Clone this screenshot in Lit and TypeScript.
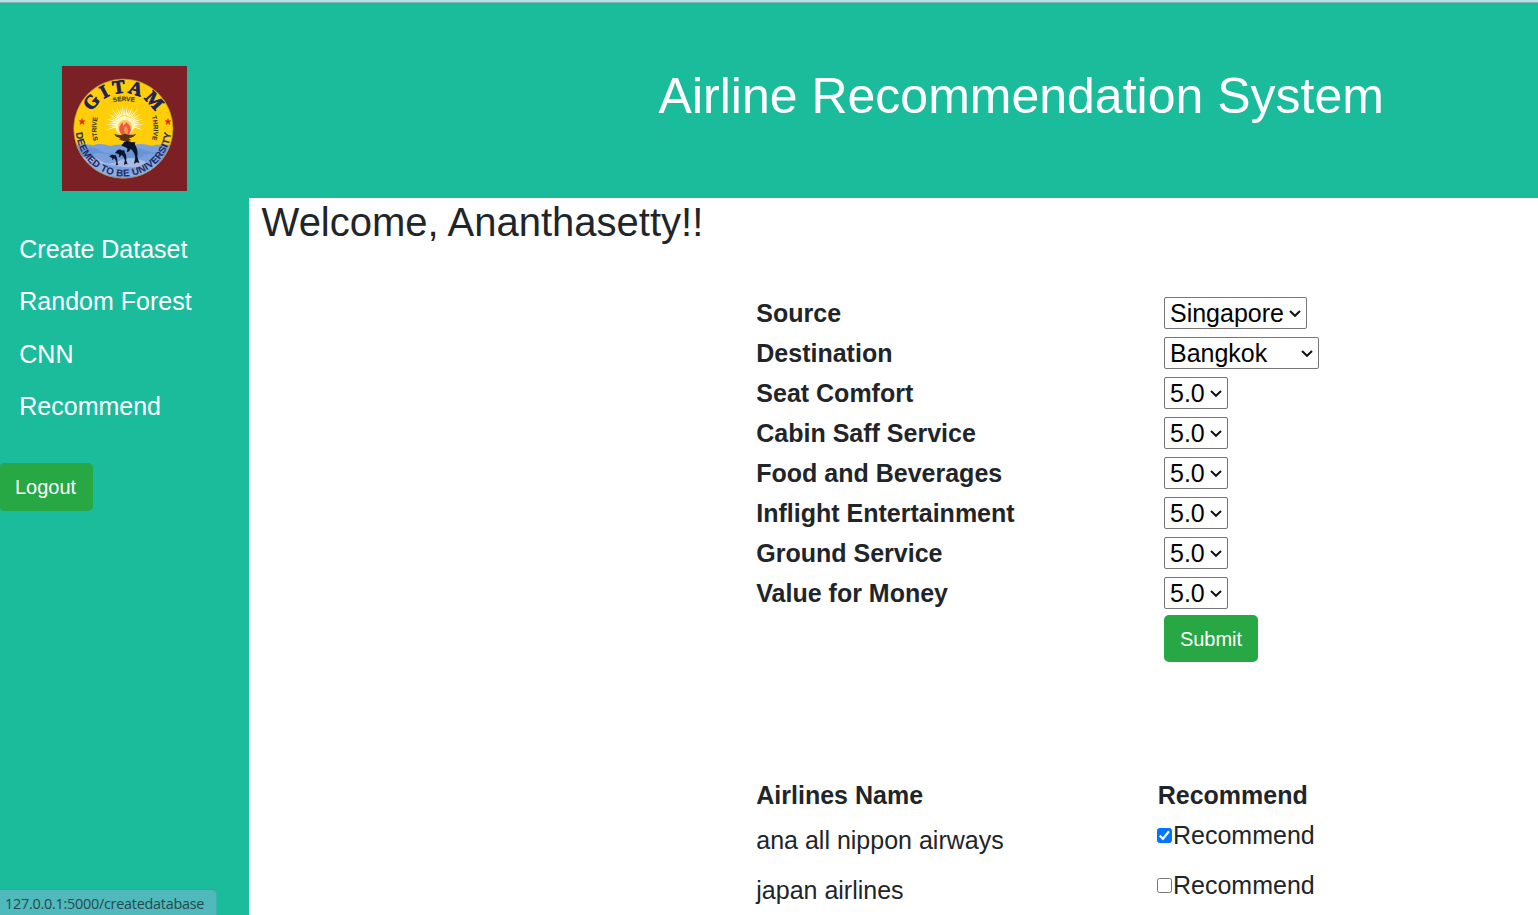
import { LitElement, html, svg, css } from "lit";
import { customElement, state } from "lit/decorators.js";

const rays = Array.from({ length: 27 }, (_, i) => {
  const a = Math.PI * (-1.1 + (i * 1.2) / 26);
  const r = i % 2 ? 50 : 62;
  const p = (ang: number, d: number) => `${188 + Math.cos(ang) * d},${174 + Math.sin(ang) * d}`;
  return svg`<polygon points="${p(a - 0.08, 26)} ${p(a, r)} ${p(a + 0.08, 26)}"/>`;
});

const dolphin = "M0 13 C4 11 6 3 13 1 C20 -2 27 1 32 4 C35 2 39 3 43 5 C39 7 41 9 42 12 C48 21 50 33 48 46 L54 63 L46 61 L38 66 L42 47 C40 36 36 28 28 22 C26 27 23 30 17 32 L18 21 C12 17 6 16 0 13Z";

@customElement("university-logo")
export class UniversityLogo extends LitElement {
  static styles = css`
    :host { display: block; width: 125px; height: 125px; }
    svg { display: block; width: 100%; height: 100%; }
    text { font-family: "Liberation Sans", Arial, sans-serif; font-weight: bold; fill: #1e2458; }
    .name { font-family: "Liberation Serif", serif; font-size: 56px; fill: #20205c; stroke: #20205c; stroke-width: 2.5; }
    .small { font-size: 19px; fill: #3b3718; stroke: #3b3718; stroke-width: .4; }
    .motto { font-size: 29px; fill: #1f2a62; stroke: #1f2a62; stroke-width: .3; }
  `;
  render() {
    return html`<svg viewBox="0 0 375 375" role="img" aria-label="GITAM">
      <defs>
        <clipPath id="disc"><circle cx="184" cy="188" r="149"/></clipPath>
        <path id="top" d="M77 188 A107 107 0 0 1 291 188"/>
        <path id="bottom" d="M41 188 A143 143 0 0 0 327 188"/>
        <path id="left" d="M108 223 Q98 188 108 151"/>
        <path id="right" d="M269 151 Q281 188 269 226"/>
        <path id="serve" d="M154 109 Q186 101 220 109"/>
      </defs>
      <rect width="375" height="375" fill="#7b2024"/>
      <g clip-path="url(#disc)">
        <rect width="375" height="375" fill="#ffce08"/>
        <path d="M30 238 Q65 232 94 238 Q115 229 144 240 Q177 232 207 239 Q235 229 268 239 Q304 231 345 240 V345 H30Z" fill="#7ba0de"/>
        <path d="M43 256 Q91 235 114 253 T182 256 T246 251 T328 262 L315 273 Q268 253 240 272 T158 272 T90 267 T43 274Z" fill="#6894d6"/>
        <path d="M52 278 Q85 262 112 282 T171 284 T250 287 T320 275 L302 294 Q258 296 231 302 T142 297 T55 290Z" fill="#a7bbe5"/>
        <path d="M72 302 Q110 283 158 309 T230 307 T302 301 L282 329 H94Z" fill="#8cafe3"/>
      </g>
      <circle cx="184" cy="188" r="149" fill="none" stroke="#ad862a" stroke-width="2"/>
      <g fill="#fffbe3">${rays}</g>
      <circle cx="188" cy="179" r="29" fill="#fff6bd"/>
      <circle cx="189" cy="183" r="21" fill="#ffc45c"/>
      <path d="M179 207 C168 194 170 178 183 169 C181 181 186 182 192 169 C208 179 211 194 200 207Z" fill="#ee5a3d"/>
      <path d="M190 204 Q182 191 191 179 Q203 191 196 205Z" fill="#ff9350"/>
      <path d="M157 204 Q175 210 189 203 Q207 210 222 203 Q217 215 200 216 L207 222 Q188 230 171 220 L176 216 Q160 214 157 204Z" fill="#5a3514"/>
      <g fill="#0d1229">
        <path transform="translate(178 225) scale(1 1.05)" d=${dolphin}/>
        <path transform="translate(159 251) scale(.7)" d=${dolphin}/>
        <path transform="translate(142 266) scale(.5)" d=${dolphin}/>
      </g>
      <text class="name" text-anchor="middle"><textPath href="#top" startOffset="50%" textLength="231">GITAM</textPath></text>
      <text class="small"><textPath href="#serve" textLength="64">SERVE</textPath></text>
      <text class="small"><textPath href="#left" textLength="69">STRIVE</textPath></text>
      <text class="small"><textPath href="#right" textLength="72">THRIVE</textPath></text>
      <text class="motto" text-anchor="middle"><textPath href="#bottom" startOffset="50%" textLength="424">DEEMED TO BE UNIVERSITY</textPath></text>
      <g fill="#e8281f" stroke="#e8281f" stroke-width="2">
        <path d="M60 158 L62 164 L68 164 L64 169 L66 175 L60 171 L54 175 L56 169 L52 164 L58 164Z"/>
        <path transform="translate(258 0)" d="M60 158 L62 164 L68 164 L64 169 L66 175 L60 171 L54 175 L56 169 L52 164 L58 164Z"/>
      </g>
    </svg>`;
  }
}

@customElement("app-root")
export class AppRoot extends LitElement {
  @state() private airlines = [
    { name: "ana all nippon airways", recommended: true },
    { name: "japan airlines", recommended: false },
  ];

  private fields = [
    ["Source", "Singapore", "city"],
    ["Destination", "Bangkok", "wide"],
    ...["Seat Comfort", "Cabin Saff Service", "Food and Beverages", "Inflight Entertainment", "Ground Service", "Value for Money"].map((n) => [n, "5.0", "score"]),
  ];

  static styles = css`
    :host { display: block; height: 915px; overflow: hidden; position: relative; background: #fff; color: #212529; font: 25px/38px "Liberation Sans", Arial, sans-serif; }
    * { box-sizing: border-box; }
    .edge { height: 3px; background: #b6e1e7; border-bottom: 1px solid #7cb5b0; }
    .page { display: grid; grid-template: 195px 717px / 249px 1fr; }
    .brand, .banner, .side { background: #1abc9c; color: #fff; }
    .brand { padding: 63px 0 0 62px; }
    .banner { padding: 63px 0 0 409.6px; }
    h1 { margin: 0; font-size: 50px; line-height: 60px; font-weight: 400; }
    nav { display: flex; flex-direction: column; padding: 24.9px 0 0 19.3px; }
    nav a { color: #fff; text-decoration: none; height: 52.4px; line-height: 52px; }
    .btn { display: block; border: 0; border-radius: 5px; background: #28a745; color: #fff; font: 20px/30px "Liberation Sans", Arial, sans-serif; padding: 9px 15px; white-space: nowrap; }
    .logout { width: 93px; height: 48px; margin-top: 30.5px; border-radius: 4px 5px 5px 4px; text-align: left; }
    .submit { width: 94px; height: 47px; padding: 9px 15px 8px; text-align: center; }
    .actions { padding: 2px 0 0 915px; }
    h2 { margin: 0; padding: 0 0 0 12.6px; font-size: 40px; line-height: 48px; font-weight: 400; }
    .form { padding: 47px 0 0 507.3px; }
    .row { display: grid; grid-template-columns: 407.7px auto; height: 40px; align-items: center; justify-content: start; }
    .row label { font-weight: 700; }
    .pick { position: relative; display: block; height: 32px; }
    .pick svg { position: absolute; right: 6px; top: 13px; width: 12px; height: 8px; pointer-events: none; }
    select { appearance: none; display: block; height: 32px; margin: 0; border: 1px solid #767676; border-radius: 2px; background: #fff; color: #000; font: 25px/30px "Liberation Sans", Arial, sans-serif; padding: 0 0 0 5px; }
    .city { width: 143px; } .wide { width: 155px; } .score { width: 64px; }
    .results { display: grid; grid-template-columns: 401.4px auto; grid-template-rows: 40px 50px 50px; padding: 113px 0 0 507.3px; justify-content: start; }
    .results b { line-height: 40px; }
    .airline { line-height: 50px; }
    .check { display: flex; align-items: center; height: 40px; }
    .box { display: grid; margin: 0 1.3px 0 -1px; }
    .box > * { grid-area: 1 / 1; width: 15px; height: 15px; margin: 0; }
    .box input { appearance: none; border: 1px solid #767676; border-radius: 2.5px; background: #fff; }
    .box input:checked { background: #0075ff; border-color: #0075ff; }
    .box svg { pointer-events: none; z-index: 1; }
    .status { position: absolute; left: 0; bottom: 0; width: 216.5px; height: 26px; padding-left: 5px; background: #50b9bc; border-top: 1px solid #32a596; border-right: 1px solid #40aea9; border-radius: 0 5px 0 0; color: #24494b; font: 14.4px/27px "Open Sans", "Noto Sans", sans-serif; letter-spacing: -0.25px; white-space: nowrap; }
  `;

  private toggle(i: number) {
    this.airlines = this.airlines.map((a, n) => (n === i ? { ...a, recommended: !a.recommended } : a));
  }

  render() {
    return html`
      <div class="edge"></div>
      <div class="page">
        <div class="brand"><university-logo></university-logo></div>
        <header class="banner"><h1>Airline Recommendation System</h1></header>
        <aside class="side">
          <nav>${["Create Dataset", "Random Forest", "CNN", "Recommend"].map((n) => html`<a href="#">${n}</a>`)}</nav>
          <button class="btn logout">Logout</button>
        </aside>
        <main>
          <h2>Welcome, Ananthasetty!!</h2>
          <div class="form">
            ${this.fields.map(([name, value, size]) => html`<div class="row">
              <label>${name}</label>
              <span class="pick"><select class=${size} aria-label=${name}><option>${value}</option></select>
                <svg viewBox="0 0 12 8" fill="none" stroke="#111" stroke-width="2"><path d="M1 1 L6 5.8 L11 1"/></svg></span>
            </div>`)}
          </div>
          <div class="actions"><button class="btn submit">Submit</button></div>
          <div class="results">
            <b>Airlines Name</b><b>Recommend</b>
            ${this.airlines.map((a, i) => html`<span class="airline">${a.name}</span>
              <label class="check"><span class="box"><input type="checkbox" .checked=${a.recommended} @change=${() => this.toggle(i)}>
                ${a.recommended ? html`<svg viewBox="0 0 15 15" fill="none" stroke="#fff" stroke-width="2.2"><path d="M2.8 7.6 L6 10.8 L12 3.3"/></svg>` : ""}</span>Recommend</label>`)}
          </div>
        </main>
      </div>
      <div class="status">127.0.0.1:5000/createdatabase</div>
    `;
  }
}
